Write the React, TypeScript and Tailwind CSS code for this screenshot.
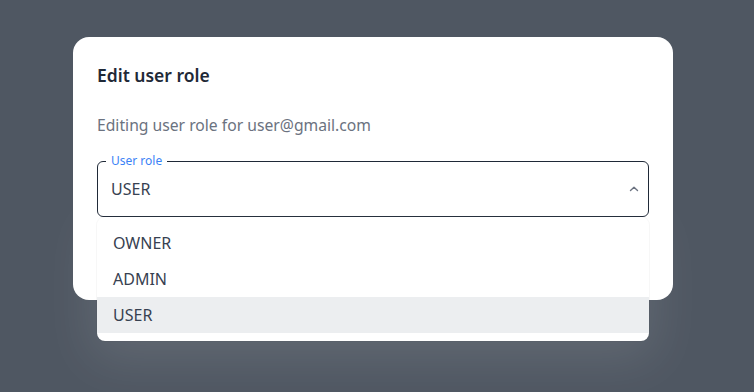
import React from "react";

export default function App() {
  const font = { fontFamily: '"Noto Sans", Inter, sans-serif' };
  return (
    <div
      className="relative w-[754px] h-[392px] overflow-hidden bg-[#4f5762] flex pl-[73px] pt-[37px]"
      style={font}
    >
      <div className="relative w-[600px] h-[263px] rounded-[16px] bg-white px-6 pt-6">
        <h2 className="text-[17.5px] leading-7 font-semibold text-[#1f2937]">Edit user role</h2>
        <p className="mt-6 text-[15.7px] leading-6 text-[#6b7280]">Editing user role for user@gmail.com</p>
        <div className="relative mt-6">
          <div className="relative h-[56px] rounded-[6px] border border-[#1f2937] flex items-center pl-[13px] pr-[8px]">
            <span className="absolute -top-[9px] left-[8px] bg-white px-[5px] text-[12px] leading-4 text-[#3b82f6]">
              User role
            </span>
            <span className="flex-1 text-[16px] text-[#374151]">USER</span>
            <svg width="12" height="12" viewBox="0 0 12 12" className="text-[#6b7280]">
              <path d="M2.5 7.5 L6 4.2 L9.5 7.5" fill="none" stroke="currentColor" strokeWidth="1.4" strokeLinecap="round" strokeLinejoin="round" />
            </svg>
          </div>
          <div className="absolute left-0 right-0 top-[56px] z-10 rounded-[8px] bg-white py-2 shadow-[0_0_0_1px_rgba(0,0,0,0.03),0_12px_50px_8px_rgba(255,255,255,0.10)]">
            {["OWNER", "ADMIN", "USER"].map((o) => (
              <div
                key={o}
                className={
                  o === "USER"
                    ? "h-9 flex items-center pl-4 text-[16px] text-[#374151] bg-[#eceef0]"
                    : "h-9 flex items-center pl-4 text-[16px] text-[#374151]"
                }
              >
                {o}
              </div>
            ))}
          </div>
        </div>
      </div>
    </div>
  );
}
